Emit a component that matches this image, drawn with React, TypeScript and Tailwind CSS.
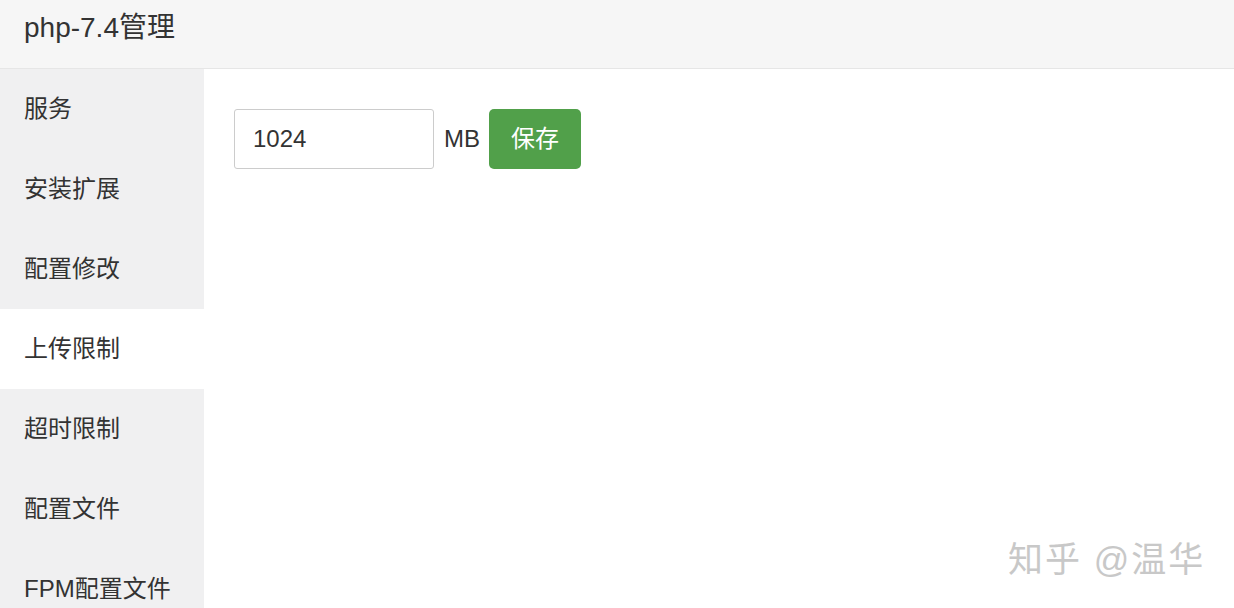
import React from "react";

const menu = ["服务", "安装扩展", "配置修改", "上传限制", "超时限制", "配置文件", "FPM配置文件"];

export default function App() {
  const font = { fontFamily: '"Liberation Sans", "Noto Sans CJK SC", sans-serif' };
  return (
    <div className="w-[1234px] h-[608px] overflow-hidden bg-white text-[#333]" style={font}>
      {/* Header */}
      <div className="h-[69px] bg-[#f6f6f6] border-b border-[#e6e6e6] flex items-center px-6">
        <span className="text-[28px] leading-none -mt-3">php-7.4管理</span>
      </div>
      <div className="flex relative">
        {/* Sidebar */}
        <div className="w-[204px] bg-[#f0f0f1] flex flex-col">
          {menu.map((m, i) => (
            <div
              key={m}
              className={`h-[80px] flex items-center px-6 text-[24px] shrink-0 ${i === 3 ? "bg-white" : ""}`}
            >
              {m}
            </div>
          ))}
        </div>
        {/* Content */}
        <div className="flex-1 px-[30px] pt-10">
          <div className="flex items-center gap-[10px]">
            <input
              defaultValue="1024"
              className="w-[200px] h-[60px] border border-[#ccc] rounded-[3px] px-[18px] text-[24px] text-[#333] outline-none"
              style={font}
            />
            <span className="text-[24px] -mr-[1px]">MB</span>
            <button className="w-[92px] h-[60px] bg-[#51a04a] text-white rounded-[5px] text-[24px]">保存</button>
          </div>
        </div>
        {/* Watermark */}
        <div className="absolute left-[1008px] top-[465px] text-[35px] text-[#c8c8c8] tracking-[2px]">知乎 @温华</div>
      </div>
    </div>
  );
}
